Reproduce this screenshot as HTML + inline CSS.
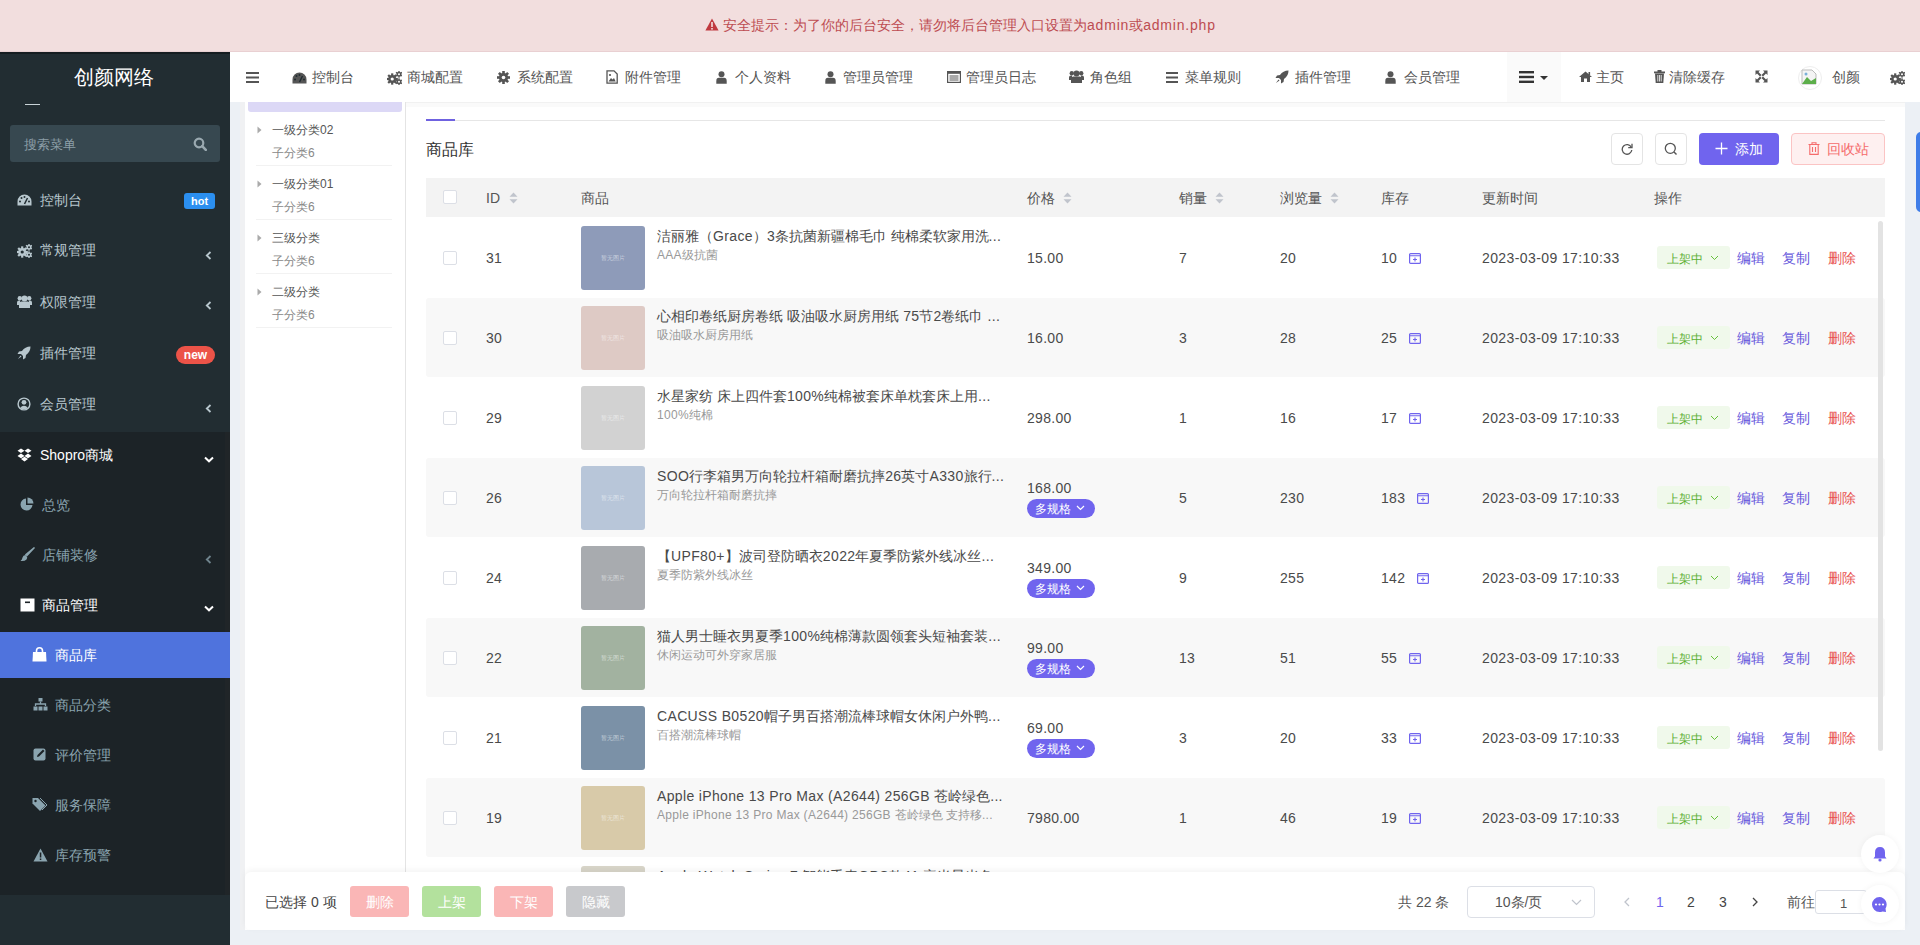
<!DOCTYPE html><html><head><meta charset="utf-8"><style>
*{box-sizing:border-box;margin:0;padding:0}
html,body{width:1920px;height:945px;overflow:hidden;font-family:"Liberation Sans",sans-serif;font-size:14px;color:#333;background:#ecf0f5;position:relative}
.a{position:absolute}
svg{display:block}
.t{position:absolute;white-space:nowrap;line-height:1}
</style></head><body>
<div class="a" style="left:0px;top:0px;width:1920px;height:52px;background:#f2dede;border-bottom:1px solid #e9d0d2"></div>
<svg class="a" style="left:705px;top:18px;" width="14" height="13" viewBox="0 0 14 13"><path d="M7 0.5 L13.6 12.5 H0.4 Z" fill="#c0393f"/><rect x="6.2" y="4" width="1.6" height="5" fill="#f2dede"/><rect x="6.2" y="10" width="1.6" height="1.6" fill="#f2dede"/></svg>
<div class="t" style="left:723px;top:18.0px;height:14px;line-height:14px;font-size:14px;color:#bd4c51;">安全提示：为了你的后台安全，请勿将后台管理入口设置为<span style="letter-spacing:.8px">admin</span>或<span style="letter-spacing:.8px">admin.php</span></div>
<div class="a" style="left:0px;top:52px;width:230px;height:893px;background:#222d32"></div>
<div class="a" style="left:0px;top:432px;width:230px;height:463px;background:#1c2327"></div>
<div class="a" style="left:0px;top:52px;width:230px;height:2px;background:#161d21"></div>
<div class="a" style="left:225px;top:432px;width:5px;height:463px;background:#202528"></div>
<div class="t" style="left:74px;top:67.0px;height:20px;line-height:20px;font-size:20px;color:#fff;">创颜网络</div>
<div class="a" style="left:25px;top:104px;width:15px;height:1px;background:#c9d3d7"></div>
<div class="a" style="left:10px;top:125px;width:210px;height:37px;background:#374850;border-radius:3px"></div>
<div class="t" style="left:24px;top:137.5px;height:13px;line-height:13px;font-size:13px;color:#8d9fa8;">搜索菜单</div>
<svg class="a" style="left:193px;top:137px;" width="14" height="14" viewBox="0 0 14 14"><circle cx="6" cy="6" r="4.3" stroke="#9aa9b0" stroke-width="2.2" fill="none"/><path d="M9.2 9.2 L12.8 12.8" stroke="#9aa9b0" stroke-width="2.6" stroke-linecap="round"/></svg>
<svg class="a" style="left:17px;top:194px;" width="15" height="12" viewBox="0 0 15 12"><path d="M7.5 0.5 A7 7 0 0 0 0.5 7.5 V11.5 H14.5 V7.5 A7 7 0 0 0 7.5 0.5 Z" fill="#b8c7ce"/><path d="M7.5 10 L10.5 4" stroke="#222d32" stroke-width="1.6"/><circle cx="3" cy="7.5" r="1" fill="#222d32"/><circle cx="4.5" cy="4" r="1" fill="#222d32"/><circle cx="7.5" cy="3" r="1" fill="#222d32"/><circle cx="12" cy="7.5" r="1" fill="#222d32"/></svg>
<div class="t" style="left:40px;top:193.0px;height:14px;line-height:14px;font-size:14px;color:#b8c7ce;">控制台</div>
<div class="a" style="left:184px;top:193px;width:31px;height:16px;background:#2b8ff0;border-radius:3px"></div>
<div class="t" style="left:184px;top:195.5px;height:11px;line-height:11px;font-size:11px;color:#fff;width:31px;text-align:center;font-weight:bold">hot</div>
<svg class="a" style="left:17px;top:244px;" width="15" height="14" viewBox="0 0 15 14"><g transform="translate(5.2 8)"><circle r="3.9" fill="#b8c7ce"/><rect x="-1.1" y="-5.66" width="2.2" height="2.64" fill="#b8c7ce" transform="rotate(0.0)"/><rect x="-1.1" y="-5.66" width="2.2" height="2.64" fill="#b8c7ce" transform="rotate(45.0)"/><rect x="-1.1" y="-5.66" width="2.2" height="2.64" fill="#b8c7ce" transform="rotate(90.0)"/><rect x="-1.1" y="-5.66" width="2.2" height="2.64" fill="#b8c7ce" transform="rotate(135.0)"/><rect x="-1.1" y="-5.66" width="2.2" height="2.64" fill="#b8c7ce" transform="rotate(180.0)"/><rect x="-1.1" y="-5.66" width="2.2" height="2.64" fill="#b8c7ce" transform="rotate(225.0)"/><rect x="-1.1" y="-5.66" width="2.2" height="2.64" fill="#b8c7ce" transform="rotate(270.0)"/><rect x="-1.1" y="-5.66" width="2.2" height="2.64" fill="#b8c7ce" transform="rotate(315.0)"/><circle r="1.6" fill="#222d32"/></g><g transform="translate(12 3.2)"><circle r="2.5" fill="#b8c7ce"/><rect x="-0.65" y="-3.54" width="1.3" height="1.56" fill="#b8c7ce" transform="rotate(0.0)"/><rect x="-0.65" y="-3.54" width="1.3" height="1.56" fill="#b8c7ce" transform="rotate(60.0)"/><rect x="-0.65" y="-3.54" width="1.3" height="1.56" fill="#b8c7ce" transform="rotate(120.0)"/><rect x="-0.65" y="-3.54" width="1.3" height="1.56" fill="#b8c7ce" transform="rotate(180.0)"/><rect x="-0.65" y="-3.54" width="1.3" height="1.56" fill="#b8c7ce" transform="rotate(240.0)"/><rect x="-0.65" y="-3.54" width="1.3" height="1.56" fill="#b8c7ce" transform="rotate(300.0)"/><circle r="1.0" fill="#222d32"/></g><g transform="translate(12 10.8)"><circle r="2.5" fill="#b8c7ce"/><rect x="-0.65" y="-3.54" width="1.3" height="1.56" fill="#b8c7ce" transform="rotate(0.0)"/><rect x="-0.65" y="-3.54" width="1.3" height="1.56" fill="#b8c7ce" transform="rotate(60.0)"/><rect x="-0.65" y="-3.54" width="1.3" height="1.56" fill="#b8c7ce" transform="rotate(120.0)"/><rect x="-0.65" y="-3.54" width="1.3" height="1.56" fill="#b8c7ce" transform="rotate(180.0)"/><rect x="-0.65" y="-3.54" width="1.3" height="1.56" fill="#b8c7ce" transform="rotate(240.0)"/><rect x="-0.65" y="-3.54" width="1.3" height="1.56" fill="#b8c7ce" transform="rotate(300.0)"/><circle r="1.0" fill="#222d32"/></g></svg>
<div class="t" style="left:40px;top:243.0px;height:14px;line-height:14px;font-size:14px;color:#b8c7ce;">常规管理</div>
<svg class="a" style="left:205px;top:251px;" width="7" height="9" viewBox="0 0 7 9"><path d="M5.5 1 L1.8 4.5 L5.5 8" stroke="#b8c7ce" stroke-width="1.8" fill="none"/></svg>
<svg class="a" style="left:17px;top:295px;" width="15" height="13" viewBox="0 0 15 13"><circle cx="7.5" cy="3.5" r="3" fill="#b8c7ce"/><circle cx="2.8" cy="3.2" r="2.2" fill="#b8c7ce"/><circle cx="12.2" cy="3.2" r="2.2" fill="#b8c7ce"/><path d="M2 13 V9 Q2 6.5 4.5 6.5 H10.5 Q13 6.5 13 9 V13 Z" fill="#b8c7ce"/><path d="M0 10 V7.5 Q0 5.5 2 5.5 H3 V10 Z M15 10 V7.5 Q15 5.5 13 5.5 H12 V10 Z" fill="#b8c7ce"/></svg>
<div class="t" style="left:40px;top:295.0px;height:14px;line-height:14px;font-size:14px;color:#b8c7ce;">权限管理</div>
<svg class="a" style="left:205px;top:301px;" width="7" height="9" viewBox="0 0 7 9"><path d="M5.5 1 L1.8 4.5 L5.5 8" stroke="#b8c7ce" stroke-width="1.8" fill="none"/></svg>
<svg class="a" style="left:17px;top:346px;" width="14" height="14" viewBox="0 0 14 14"><path d="M13.5 0.5 Q8 0.5 5 5 L2 5.5 L0.5 8 L4 8 L6 10 L6 13.5 L8.5 12 L9 9 Q13.5 6 13.5 0.5 Z" fill="#b8c7ce"/><path d="M3.5 9.5 L1 13 L4.5 10.5 Z" fill="#b8c7ce"/></svg>
<div class="t" style="left:40px;top:346.0px;height:14px;line-height:14px;font-size:14px;color:#b8c7ce;">插件管理</div>
<div class="a" style="left:176px;top:346px;width:39px;height:18px;background:#ec5348;border-radius:9px"></div>
<div class="t" style="left:176px;top:349.0px;height:12px;line-height:12px;font-size:12px;color:#fff;width:39px;text-align:center;font-weight:bold">new</div>
<svg class="a" style="left:17px;top:397px;" width="14" height="14" viewBox="0 0 14 14"><circle cx="7" cy="7" r="6.6" fill="#b8c7ce"/><circle cx="7" cy="7" r="5.2" fill="#222d32"/><circle cx="7" cy="5.3" r="2.4" fill="#b8c7ce"/><path d="M2.8 11.2 Q7 6.5 11.2 11.2 Q7 13.5 2.8 11.2Z" fill="#b8c7ce"/></svg>
<div class="t" style="left:40px;top:397.0px;height:14px;line-height:14px;font-size:14px;color:#b8c7ce;">会员管理</div>
<svg class="a" style="left:205px;top:404px;" width="7" height="9" viewBox="0 0 7 9"><path d="M5.5 1 L1.8 4.5 L5.5 8" stroke="#b8c7ce" stroke-width="1.8" fill="none"/></svg>
<svg class="a" style="left:17px;top:448px;" width="15" height="14" viewBox="0 0 15 14"><path d="M4 0.5 L7.5 2.8 L4 5.1 L0.5 2.8 Z M11 0.5 L14.5 2.8 L11 5.1 L7.5 2.8 Z M4 5.6 L7.5 7.9 L4 10.2 L0.5 7.9 Z M11 5.6 L14.5 7.9 L11 10.2 L7.5 7.9 Z M4 11 L7.5 8.8 L11 11 L7.5 13.5 Z" fill="#fff"/></svg>
<div class="t" style="left:40px;top:448.0px;height:14px;line-height:14px;font-size:14px;color:#fff;">Shopro商城</div>
<svg class="a" style="left:204px;top:456px;" width="10" height="7" viewBox="0 0 10 7"><path d="M1 1.5 L5 5.3 L9 1.5" stroke="#fff" stroke-width="2" fill="none"/></svg>
<svg class="a" style="left:20px;top:497px;" width="14" height="14" viewBox="0 0 14 14"><path d="M6 1.5 A6 6 0 1 0 12.5 8 H6 Z" fill="#8aa4af"/><path d="M7.5 0.5 A6 6 0 0 1 13.5 6.5 H7.5 Z" fill="#8aa4af"/></svg>
<div class="t" style="left:42px;top:498.0px;height:14px;line-height:14px;font-size:14px;color:#8aa4af;">总览</div>
<svg class="a" style="left:20px;top:547px;" width="15" height="15" viewBox="0 0 15 15"><path d="M14.5 0.5 L7 8.5 L6 7.5 Z" fill="#8aa4af" stroke="#8aa4af" stroke-width="1.5"/><path d="M5.5 8 Q3 8 2.5 10.5 Q2.2 12.5 0.5 14 Q4.5 14.5 6.5 12.5 Q8 10.5 6.5 9Z" fill="#8aa4af"/></svg>
<div class="t" style="left:42px;top:548.0px;height:14px;line-height:14px;font-size:14px;color:#8aa4af;">店铺装修</div>
<svg class="a" style="left:205px;top:555px;" width="7" height="9" viewBox="0 0 7 9"><path d="M5.5 1 L1.8 4.5 L5.5 8" stroke="#6f848d" stroke-width="1.8" fill="none"/></svg>
<svg class="a" style="left:20px;top:598px;" width="15" height="14" viewBox="0 0 15 14"><rect x="0.5" y="0.5" width="14" height="13" fill="#fff"/><rect x="5" y="3.5" width="5" height="1.6" fill="#1c2327"/></svg>
<div class="t" style="left:42px;top:598.0px;height:14px;line-height:14px;font-size:14px;color:#fff;">商品管理</div>
<svg class="a" style="left:204px;top:605px;" width="10" height="7" viewBox="0 0 10 7"><path d="M1 1.5 L5 5.3 L9 1.5" stroke="#fff" stroke-width="2" fill="none"/></svg>
<div class="a" style="left:0px;top:632px;width:230px;height:46px;background:#4f73dd"></div>
<svg class="a" style="left:32px;top:647px;" width="15" height="15" viewBox="0 0 15 15"><path d="M4.5 5 V3.8 A3 3 0 0 1 10.5 3.8 V5" stroke="#fff" stroke-width="1.6" fill="none"/><path d="M1 5 H14 L14.5 14.5 H0.5 Z" fill="#fff"/></svg>
<div class="t" style="left:55px;top:648.0px;height:14px;line-height:14px;font-size:14px;color:#fff;">商品库</div>
<svg class="a" style="left:33px;top:698px;" width="15" height="13" viewBox="0 0 15 13"><rect x="5.5" y="0" width="4" height="3.5" fill="#8aa4af"/><path d="M7.5 3.5 V6 M2.5 8 V6 H12.5 V8" stroke="#8aa4af" stroke-width="1.3" fill="none"/><rect x="0.5" y="8.5" width="4" height="4" fill="#8aa4af"/><rect x="5.5" y="8.5" width="4" height="4" fill="#8aa4af"/><rect x="10.5" y="8.5" width="4" height="4" fill="#8aa4af"/></svg>
<div class="t" style="left:55px;top:698.0px;height:14px;line-height:14px;font-size:14px;color:#8aa4af;">商品分类</div>
<svg class="a" style="left:33px;top:747px;" width="14" height="14" viewBox="0 0 14 14"><rect x="0.5" y="1.5" width="12" height="12" rx="2" fill="#8aa4af"/><path d="M4 10 L4.5 8 L10 2.5 L11.5 4 L6 9.5 Z" fill="#1c2327"/></svg>
<div class="t" style="left:55px;top:748.0px;height:14px;line-height:14px;font-size:14px;color:#8aa4af;">评价管理</div>
<svg class="a" style="left:32px;top:797px;" width="15" height="14" viewBox="0 0 15 14"><path d="M0.5 1 H6 L13.5 8.5 L8 14 L0.5 6.5 Z" fill="#8aa4af"/><circle cx="3.5" cy="4" r="1.2" fill="#1c2327"/><path d="M8 1 L15 8 L10 13" stroke="#8aa4af" stroke-width="1" fill="none"/></svg>
<div class="t" style="left:55px;top:798.0px;height:14px;line-height:14px;font-size:14px;color:#8aa4af;">服务保障</div>
<svg class="a" style="left:33px;top:848px;" width="15" height="14" viewBox="0 0 15 14"><path d="M7.5 0.5 L14.5 13.5 H0.5 Z" fill="#8aa4af"/><rect x="6.8" y="4.5" width="1.5" height="5" fill="#1c2327"/><rect x="6.8" y="10.5" width="1.5" height="1.5" fill="#1c2327"/></svg>
<div class="t" style="left:55px;top:848.0px;height:14px;line-height:14px;font-size:14px;color:#8aa4af;">库存预警</div>
<div class="a" style="left:230px;top:52px;width:1690px;height:50px;background:#fff"></div>
<svg class="a" style="left:246px;top:72px;" width="13" height="11" viewBox="0 0 13 11"><rect y="0" width="13" height="2" fill="#555"/><rect y="4.5" width="13" height="2" fill="#555"/><rect y="9" width="13" height="2" fill="#555"/></svg>
<svg class="a" style="left:292px;top:72px;" width="15" height="12" viewBox="0 0 15 12"><path d="M7.5 0.5 A7 7 0 0 0 0.5 7.5 V11.5 H14.5 V7.5 A7 7 0 0 0 7.5 0.5 Z" fill="#555"/><path d="M7.5 10 L10.5 4" stroke="#222d32" stroke-width="1.6"/><circle cx="3" cy="7.5" r="1" fill="#222d32"/><circle cx="4.5" cy="4" r="1" fill="#222d32"/><circle cx="7.5" cy="3" r="1" fill="#222d32"/><circle cx="12" cy="7.5" r="1" fill="#222d32"/></svg>
<div class="t" style="left:312px;top:70.0px;height:14px;line-height:14px;font-size:14px;color:#555;">控制台</div>
<svg class="a" style="left:387px;top:71px;" width="15" height="14" viewBox="0 0 15 14"><g transform="translate(5.2 8)"><circle r="3.9" fill="#555"/><rect x="-1.1" y="-5.66" width="2.2" height="2.64" fill="#555" transform="rotate(0.0)"/><rect x="-1.1" y="-5.66" width="2.2" height="2.64" fill="#555" transform="rotate(45.0)"/><rect x="-1.1" y="-5.66" width="2.2" height="2.64" fill="#555" transform="rotate(90.0)"/><rect x="-1.1" y="-5.66" width="2.2" height="2.64" fill="#555" transform="rotate(135.0)"/><rect x="-1.1" y="-5.66" width="2.2" height="2.64" fill="#555" transform="rotate(180.0)"/><rect x="-1.1" y="-5.66" width="2.2" height="2.64" fill="#555" transform="rotate(225.0)"/><rect x="-1.1" y="-5.66" width="2.2" height="2.64" fill="#555" transform="rotate(270.0)"/><rect x="-1.1" y="-5.66" width="2.2" height="2.64" fill="#555" transform="rotate(315.0)"/><circle r="1.6" fill="#fff"/></g><g transform="translate(12 3.2)"><circle r="2.5" fill="#555"/><rect x="-0.65" y="-3.54" width="1.3" height="1.56" fill="#555" transform="rotate(0.0)"/><rect x="-0.65" y="-3.54" width="1.3" height="1.56" fill="#555" transform="rotate(60.0)"/><rect x="-0.65" y="-3.54" width="1.3" height="1.56" fill="#555" transform="rotate(120.0)"/><rect x="-0.65" y="-3.54" width="1.3" height="1.56" fill="#555" transform="rotate(180.0)"/><rect x="-0.65" y="-3.54" width="1.3" height="1.56" fill="#555" transform="rotate(240.0)"/><rect x="-0.65" y="-3.54" width="1.3" height="1.56" fill="#555" transform="rotate(300.0)"/><circle r="1.0" fill="#fff"/></g><g transform="translate(12 10.8)"><circle r="2.5" fill="#555"/><rect x="-0.65" y="-3.54" width="1.3" height="1.56" fill="#555" transform="rotate(0.0)"/><rect x="-0.65" y="-3.54" width="1.3" height="1.56" fill="#555" transform="rotate(60.0)"/><rect x="-0.65" y="-3.54" width="1.3" height="1.56" fill="#555" transform="rotate(120.0)"/><rect x="-0.65" y="-3.54" width="1.3" height="1.56" fill="#555" transform="rotate(180.0)"/><rect x="-0.65" y="-3.54" width="1.3" height="1.56" fill="#555" transform="rotate(240.0)"/><rect x="-0.65" y="-3.54" width="1.3" height="1.56" fill="#555" transform="rotate(300.0)"/><circle r="1.0" fill="#fff"/></g></svg>
<div class="t" style="left:407px;top:70.0px;height:14px;line-height:14px;font-size:14px;color:#555;">商城配置</div>
<svg class="a" style="left:497px;top:71px;" width="13" height="13" viewBox="0 0 13 13"><g transform="translate(6.5 6.5)"><circle r="4.6" fill="#555"/><rect x="-1.3" y="-6.5" width="2.6" height="3" fill="#555" transform="rotate(0)"/><rect x="-1.3" y="-6.5" width="2.6" height="3" fill="#555" transform="rotate(45)"/><rect x="-1.3" y="-6.5" width="2.6" height="3" fill="#555" transform="rotate(90)"/><rect x="-1.3" y="-6.5" width="2.6" height="3" fill="#555" transform="rotate(135)"/><rect x="-1.3" y="-6.5" width="2.6" height="3" fill="#555" transform="rotate(180)"/><rect x="-1.3" y="-6.5" width="2.6" height="3" fill="#555" transform="rotate(225)"/><rect x="-1.3" y="-6.5" width="2.6" height="3" fill="#555" transform="rotate(270)"/><rect x="-1.3" y="-6.5" width="2.6" height="3" fill="#555" transform="rotate(315)"/><circle r="1.8" fill="#fff"/></g></svg>
<div class="t" style="left:517px;top:70.0px;height:14px;line-height:14px;font-size:14px;color:#555;">系统配置</div>
<svg class="a" style="left:606px;top:70px;" width="12" height="14" viewBox="0 0 12 14"><path d="M1 0.8 H8 L11.2 4 V13.2 H1 Z" stroke="#555" stroke-width="1.3" fill="none"/><path d="M2.5 11.5 L5 8 L6.5 9.5 L8 8 L9.7 11.5Z" fill="#555"/><circle cx="4" cy="5" r="1.1" fill="#555"/></svg>
<div class="t" style="left:625px;top:70.0px;height:14px;line-height:14px;font-size:14px;color:#555;">附件管理</div>
<svg class="a" style="left:716px;top:71px;" width="11" height="13" viewBox="0 0 11 13"><circle cx="5.5" cy="3.2" r="3" fill="#555"/><path d="M0.3 12.8 V10 Q0.3 6.8 3 6.8 H8 Q10.7 6.8 10.7 10 V12.8Z" fill="#555"/></svg>
<div class="t" style="left:735px;top:70.0px;height:14px;line-height:14px;font-size:14px;color:#555;">个人资料</div>
<svg class="a" style="left:825px;top:71px;" width="11" height="13" viewBox="0 0 11 13"><circle cx="5.5" cy="3.2" r="3" fill="#555"/><path d="M0.3 12.8 V10 Q0.3 6.8 3 6.8 H8 Q10.7 6.8 10.7 10 V12.8Z" fill="#555"/></svg>
<div class="t" style="left:843px;top:70.0px;height:14px;line-height:14px;font-size:14px;color:#555;">管理员管理</div>
<svg class="a" style="left:947px;top:71px;" width="14" height="12" viewBox="0 0 14 12"><rect x="0.6" y="0.6" width="12.8" height="10.8" stroke="#555" stroke-width="1.2" fill="none"/><rect x="0.6" y="0.6" width="12.8" height="2.2" fill="#555"/><path d="M2.5 5 H11.5 M2.5 7 H11.5 M2.5 9 H11.5" stroke="#555" stroke-width="1"/></svg>
<div class="t" style="left:966px;top:70.0px;height:14px;line-height:14px;font-size:14px;color:#555;">管理员日志</div>
<svg class="a" style="left:1069px;top:70px;" width="15" height="13" viewBox="0 0 15 13"><circle cx="7.5" cy="3.5" r="3" fill="#555"/><circle cx="2.8" cy="3.2" r="2.2" fill="#555"/><circle cx="12.2" cy="3.2" r="2.2" fill="#555"/><path d="M2 13 V9 Q2 6.5 4.5 6.5 H10.5 Q13 6.5 13 9 V13 Z" fill="#555"/><path d="M0 10 V7.5 Q0 5.5 2 5.5 H3 V10 Z M15 10 V7.5 Q15 5.5 13 5.5 H12 V10 Z" fill="#555"/></svg>
<div class="t" style="left:1090px;top:70.0px;height:14px;line-height:14px;font-size:14px;color:#555;">角色组</div>
<svg class="a" style="left:1166px;top:72px;" width="12" height="11" viewBox="0 0 12 11"><rect y="0" width="12" height="2" fill="#555"/><rect y="4.5" width="12" height="2" fill="#555"/><rect y="9" width="12" height="2" fill="#555"/></svg>
<div class="t" style="left:1185px;top:70.0px;height:14px;line-height:14px;font-size:14px;color:#555;">菜单规则</div>
<svg class="a" style="left:1275px;top:70px;" width="14" height="14" viewBox="0 0 14 14"><path d="M13.5 0.5 Q8 0.5 5 5 L2 5.5 L0.5 8 L4 8 L6 10 L6 13.5 L8.5 12 L9 9 Q13.5 6 13.5 0.5 Z" fill="#555"/><path d="M3.5 9.5 L1 13 L4.5 10.5 Z" fill="#555"/></svg>
<div class="t" style="left:1295px;top:70.0px;height:14px;line-height:14px;font-size:14px;color:#555;">插件管理</div>
<svg class="a" style="left:1385px;top:71px;" width="11" height="13" viewBox="0 0 11 13"><circle cx="5.5" cy="3.2" r="3" fill="#555"/><path d="M0.3 12.8 V10 Q0.3 6.8 3 6.8 H8 Q10.7 6.8 10.7 10 V12.8Z" fill="#555"/></svg>
<div class="t" style="left:1404px;top:70.0px;height:14px;line-height:14px;font-size:14px;color:#555;">会员管理</div>
<div class="a" style="left:1507px;top:52px;width:54px;height:50px;background:#fafafa"></div>
<svg class="a" style="left:1519px;top:71px;" width="15" height="12" viewBox="0 0 15 12"><rect y="0" width="15" height="2.4" fill="#333"/><rect y="4.8" width="15" height="2.4" fill="#333"/><rect y="9.6" width="15" height="2.4" fill="#333"/></svg>
<svg class="a" style="left:1540px;top:76px;" width="8" height="4" viewBox="0 0 8 4"><path d="M0 0 H8 L4 4Z" fill="#333"/></svg>
<svg class="a" style="left:1579px;top:71px;" width="13" height="11" viewBox="0 0 13 11"><path d="M6.5 0.5 L13 6 H11 V11 H8 V7.5 H5 V11 H2 V6 H0 Z" fill="#555"/><rect x="9.5" y="1" width="1.6" height="3" fill="#555"/></svg>
<div class="t" style="left:1596px;top:70.0px;height:14px;line-height:14px;font-size:14px;color:#555;">主页</div>
<svg class="a" style="left:1654px;top:70px;" width="11" height="13" viewBox="0 0 11 13"><rect x="0" y="1.5" width="11" height="1.8" fill="#555"/><rect x="3.5" y="0" width="4" height="2" fill="#555"/><path d="M1 3.5 H10 L9.3 13 H1.7 Z" fill="#555"/><path d="M3.8 5 V11.5 M5.5 5 V11.5 M7.2 5 V11.5" stroke="#fff" stroke-width=".8"/></svg>
<div class="t" style="left:1669px;top:70.0px;height:14px;line-height:14px;font-size:14px;color:#555;">清除缓存</div>
<svg class="a" style="left:1755px;top:70px;" width="13" height="13" viewBox="0 0 13 13"><path d="M0.5 0.5 H5 L3.5 2 L6.5 5 L5 6.5 L2 3.5 L0.5 5Z M12.5 0.5 V5 L11 3.5 L8 6.5 L6.5 5 L9.5 2 L8 0.5Z M0.5 12.5 V8 L2 9.5 L5 6.5 L6.5 8 L3.5 11 L5 12.5Z M12.5 12.5 H8 L9.5 11 L6.5 8 L8 6.5 L11 9.5 L12.5 8Z" fill="#555"/></svg>
<div class="a" style="left:1798px;top:66px;width:24px;height:24px;border-radius:50%;background:#fff;border:1px solid #eee"></div>
<svg class="a" style="left:1801px;top:69px;" width="16" height="16" viewBox="0 0 16 16"><path d="M1 1 H11 L15 5 V15 H1Z" fill="#f4f4f4" stroke="#bbb" stroke-width="1"/><path d="M1 15 L6 8 L10 12 L15 9 V15Z" fill="#5cae4a"/><circle cx="5" cy="5" r="1.5" fill="#7ab0d8"/></svg>
<div class="t" style="left:1832px;top:70.0px;height:14px;line-height:14px;font-size:14px;color:#555;">创颜</div>
<svg class="a" style="left:1890px;top:71px;" width="15" height="14" viewBox="0 0 15 14"><g transform="translate(5.2 8)"><circle r="3.9" fill="#555"/><rect x="-1.1" y="-5.66" width="2.2" height="2.64" fill="#555" transform="rotate(0.0)"/><rect x="-1.1" y="-5.66" width="2.2" height="2.64" fill="#555" transform="rotate(45.0)"/><rect x="-1.1" y="-5.66" width="2.2" height="2.64" fill="#555" transform="rotate(90.0)"/><rect x="-1.1" y="-5.66" width="2.2" height="2.64" fill="#555" transform="rotate(135.0)"/><rect x="-1.1" y="-5.66" width="2.2" height="2.64" fill="#555" transform="rotate(180.0)"/><rect x="-1.1" y="-5.66" width="2.2" height="2.64" fill="#555" transform="rotate(225.0)"/><rect x="-1.1" y="-5.66" width="2.2" height="2.64" fill="#555" transform="rotate(270.0)"/><rect x="-1.1" y="-5.66" width="2.2" height="2.64" fill="#555" transform="rotate(315.0)"/><circle r="1.6" fill="#fff"/></g><g transform="translate(12 3.2)"><circle r="2.5" fill="#555"/><rect x="-0.65" y="-3.54" width="1.3" height="1.56" fill="#555" transform="rotate(0.0)"/><rect x="-0.65" y="-3.54" width="1.3" height="1.56" fill="#555" transform="rotate(60.0)"/><rect x="-0.65" y="-3.54" width="1.3" height="1.56" fill="#555" transform="rotate(120.0)"/><rect x="-0.65" y="-3.54" width="1.3" height="1.56" fill="#555" transform="rotate(180.0)"/><rect x="-0.65" y="-3.54" width="1.3" height="1.56" fill="#555" transform="rotate(240.0)"/><rect x="-0.65" y="-3.54" width="1.3" height="1.56" fill="#555" transform="rotate(300.0)"/><circle r="1.0" fill="#fff"/></g><g transform="translate(12 10.8)"><circle r="2.5" fill="#555"/><rect x="-0.65" y="-3.54" width="1.3" height="1.56" fill="#555" transform="rotate(0.0)"/><rect x="-0.65" y="-3.54" width="1.3" height="1.56" fill="#555" transform="rotate(60.0)"/><rect x="-0.65" y="-3.54" width="1.3" height="1.56" fill="#555" transform="rotate(120.0)"/><rect x="-0.65" y="-3.54" width="1.3" height="1.56" fill="#555" transform="rotate(180.0)"/><rect x="-0.65" y="-3.54" width="1.3" height="1.56" fill="#555" transform="rotate(240.0)"/><rect x="-0.65" y="-3.54" width="1.3" height="1.56" fill="#555" transform="rotate(300.0)"/><circle r="1.0" fill="#fff"/></g></svg>
<div class="a" style="left:240px;top:102px;width:5px;height:828px;background:#f0f1f3"></div>
<div class="a" style="left:245px;top:102px;width:1660px;height:828px;background:#fff"></div>
<div class="a" style="left:405px;top:102px;width:1px;height:770px;background:#e4e4e4"></div>
<div class="a" style="left:406px;top:102px;width:1499px;height:1px;background:#f1f1f1"></div>
<div class="a" style="left:406px;top:103px;width:1499px;height:4px;background:#fafafa"></div>
<div class="a" style="left:248px;top:102px;width:154px;height:10px;background:#dcd8f6;border-radius:0 0 3px 3px"></div>
<svg class="a" style="left:257px;top:126px;" width="5" height="8" viewBox="0 0 5 8"><path d="M0.5 0.5 L4.5 4 L0.5 7.5Z" fill="#aaa"/></svg>
<div class="t" style="left:272px;top:124.0px;height:12px;line-height:12px;font-size:12px;color:#555;">一级分类02</div>
<div class="t" style="left:272px;top:147.0px;height:12px;line-height:12px;font-size:12px;color:#888;">子分类6</div>
<div class="a" style="left:256px;top:165px;width:136px;height:1px;background:#f2f2f2"></div>
<svg class="a" style="left:257px;top:180px;" width="5" height="8" viewBox="0 0 5 8"><path d="M0.5 0.5 L4.5 4 L0.5 7.5Z" fill="#aaa"/></svg>
<div class="t" style="left:272px;top:178.0px;height:12px;line-height:12px;font-size:12px;color:#555;">一级分类01</div>
<div class="t" style="left:272px;top:201.0px;height:12px;line-height:12px;font-size:12px;color:#888;">子分类6</div>
<div class="a" style="left:256px;top:219px;width:136px;height:1px;background:#f2f2f2"></div>
<svg class="a" style="left:257px;top:234px;" width="5" height="8" viewBox="0 0 5 8"><path d="M0.5 0.5 L4.5 4 L0.5 7.5Z" fill="#aaa"/></svg>
<div class="t" style="left:272px;top:232.0px;height:12px;line-height:12px;font-size:12px;color:#555;">三级分类</div>
<div class="t" style="left:272px;top:255.0px;height:12px;line-height:12px;font-size:12px;color:#888;">子分类6</div>
<div class="a" style="left:256px;top:273px;width:136px;height:1px;background:#f2f2f2"></div>
<svg class="a" style="left:257px;top:288px;" width="5" height="8" viewBox="0 0 5 8"><path d="M0.5 0.5 L4.5 4 L0.5 7.5Z" fill="#aaa"/></svg>
<div class="t" style="left:272px;top:286.0px;height:12px;line-height:12px;font-size:12px;color:#555;">二级分类</div>
<div class="t" style="left:272px;top:309.0px;height:12px;line-height:12px;font-size:12px;color:#888;">子分类6</div>
<div class="a" style="left:256px;top:327px;width:136px;height:1px;background:#f2f2f2"></div>
<div class="a" style="left:426px;top:119px;width:29px;height:2px;background:#6f62e0"></div>
<div class="a" style="left:455px;top:120px;width:1430px;height:1px;background:#e6e6e6"></div>
<div class="t" style="left:426px;top:142.0px;height:16px;line-height:16px;font-size:16px;color:#333;">商品库</div>
<div class="a" style="left:1611px;top:133px;width:32px;height:32px;background:#fff;border:1px solid #e4e4e4;border-radius:4px"></div>
<svg class="a" style="left:1621px;top:143px;" width="12" height="12" viewBox="0 0 12 12"><path d="M10.3 4.2 A4.8 4.8 0 1 0 10.8 7" stroke="#555" stroke-width="1.3" fill="none"/><path d="M11 0.8 V4.6 H7.2" stroke="#555" stroke-width="1.3" fill="none"/></svg>
<div class="a" style="left:1655px;top:133px;width:32px;height:32px;background:#fff;border:1px solid #e4e4e4;border-radius:4px"></div>
<svg class="a" style="left:1664px;top:142px;" width="14" height="14" viewBox="0 0 14 14"><circle cx="6.3" cy="6.3" r="5" stroke="#555" stroke-width="1.3" fill="none"/><path d="M10 10 L12.5 12.5" stroke="#555" stroke-width="1.4"/></svg>
<div class="a" style="left:1699px;top:133px;width:80px;height:32px;background:#7064ee;border-radius:4px"></div>
<svg class="a" style="left:1715px;top:142px;" width="13" height="13" viewBox="0 0 13 13"><path d="M6.5 0.5 V12.5 M0.5 6.5 H12.5" stroke="#fff" stroke-width="1.3"/></svg>
<div class="t" style="left:1735px;top:142.0px;height:14px;line-height:14px;font-size:14px;color:#fff;">添加</div>
<div class="a" style="left:1791px;top:133px;width:94px;height:32px;background:#fef0f0;border:1px solid #fbc4c4;border-radius:4px"></div>
<svg class="a" style="left:1808px;top:142px;" width="12" height="13" viewBox="0 0 12 13"><path d="M0.5 2.5 H11.5 M4 2.5 V0.7 H8 V2.5 M1.8 2.5 V12.4 H10.2 V2.5 M4.5 5 V10 M7.5 5 V10" stroke="#f56c6c" stroke-width="1.1" fill="none"/></svg>
<div class="t" style="left:1827px;top:142.0px;height:14px;line-height:14px;font-size:14px;color:#f56c6c;">回收站</div>
<div class="a" style="left:426px;top:178px;width:1459px;height:39px;background:#f3f3f3"></div>
<div class="a" style="left:443px;top:190px;width:14px;height:14px;background:#fff;border:1px solid #dcdfe6;border-radius:2px"></div>
<div class="t" style="left:486px;top:191.0px;height:14px;line-height:14px;font-size:14px;color:#555;">ID</div>
<svg class="a" style="left:509px;top:192px;" width="9" height="12" viewBox="0 0 9 12"><path d="M4.5 0.5 L8.5 4.8 H0.5Z M4.5 11.5 L8.5 7.2 H0.5Z" fill="#c0c4cc"/></svg>
<div class="t" style="left:581px;top:191.0px;height:14px;line-height:14px;font-size:14px;color:#555;">商品</div>
<div class="t" style="left:1027px;top:191.0px;height:14px;line-height:14px;font-size:14px;color:#555;">价格</div>
<svg class="a" style="left:1063px;top:192px;" width="9" height="12" viewBox="0 0 9 12"><path d="M4.5 0.5 L8.5 4.8 H0.5Z M4.5 11.5 L8.5 7.2 H0.5Z" fill="#c0c4cc"/></svg>
<div class="t" style="left:1179px;top:191.0px;height:14px;line-height:14px;font-size:14px;color:#555;">销量</div>
<svg class="a" style="left:1215px;top:192px;" width="9" height="12" viewBox="0 0 9 12"><path d="M4.5 0.5 L8.5 4.8 H0.5Z M4.5 11.5 L8.5 7.2 H0.5Z" fill="#c0c4cc"/></svg>
<div class="t" style="left:1280px;top:191.0px;height:14px;line-height:14px;font-size:14px;color:#555;">浏览量</div>
<svg class="a" style="left:1330px;top:192px;" width="9" height="12" viewBox="0 0 9 12"><path d="M4.5 0.5 L8.5 4.8 H0.5Z M4.5 11.5 L8.5 7.2 H0.5Z" fill="#c0c4cc"/></svg>
<div class="t" style="left:1381px;top:191.0px;height:14px;line-height:14px;font-size:14px;color:#555;">库存</div>
<div class="t" style="left:1482px;top:191.0px;height:14px;line-height:14px;font-size:14px;color:#555;">更新时间</div>
<div class="t" style="left:1654px;top:191.0px;height:14px;line-height:14px;font-size:14px;color:#555;">操作</div>
<div class="a" style="left:443px;top:251px;width:14px;height:14px;background:#fff;border:1px solid #dcdfe6;border-radius:2px"></div>
<div class="t" style="left:486px;top:251.0px;height:14px;line-height:14px;font-size:14px;color:#4a4a4a;letter-spacing:.3px">31</div>
<div class="a" style="left:581px;top:226px;width:64px;height:64px;background:#8e9bb9;border-radius:3px"></div>
<div class="t" style="left:601px;top:255.0px;height:6px;line-height:6px;font-size:6px;color:rgba(255,255,255,.55);">暂无图片</div>
<div class="t" style="left:657px;top:229.0px;height:14px;line-height:14px;font-size:14px;color:#4a4a4a;">洁丽雅（<span style="letter-spacing:0.35px">Grace</span>）3条抗菌新疆棉毛巾 纯棉柔软家用洗<span style="letter-spacing:0.35px">...</span></div>
<div class="t" style="left:657px;top:248.5px;height:12px;line-height:12px;font-size:12px;color:#999;"><span style="letter-spacing:0.3px">AAA</span>级抗菌</div>
<div class="t" style="left:1027px;top:251.0px;height:14px;line-height:14px;font-size:14px;color:#4a4a4a;letter-spacing:.3px">15.00</div>
<div class="t" style="left:1179px;top:251.0px;height:14px;line-height:14px;font-size:14px;color:#4a4a4a;letter-spacing:.3px">7</div>
<div class="t" style="left:1280px;top:251.0px;height:14px;line-height:14px;font-size:14px;color:#4a4a4a;letter-spacing:.3px">20</div>
<div class="t" style="left:1381px;top:251.0px;height:14px;line-height:14px;font-size:14px;color:#4a4a4a;letter-spacing:.3px">10</div>
<svg class="a" style="left:1409px;top:252px;" width="12" height="12" viewBox="0 0 12 12"><rect x="0.6" y="1.6" width="10.8" height="9.8" rx="1" stroke="#7064ee" stroke-width="1.2" fill="none"/><path d="M0.6 3.8 H11.4 M6 5.5 V9.5 M4 7.5 H8" stroke="#7064ee" stroke-width="1.1"/></svg>
<div class="t" style="left:1482px;top:251.0px;height:14px;line-height:14px;font-size:14px;color:#4a4a4a;letter-spacing:.4px">2023-03-09 17:10:33</div>
<div class="a" style="left:1657px;top:246px;width:73px;height:23px;background:#f0f9eb;border-radius:3px"></div>
<div class="t" style="left:1667px;top:253.0px;height:12px;line-height:12px;font-size:12px;color:#5cb034;">上架中</div>
<svg class="a" style="left:1710px;top:255px;" width="9" height="6" viewBox="0 0 9 6"><path d="M1 1 L4.5 4.5 L8 1" stroke="#67c23a" stroke-width="1" fill="none"/></svg>
<div class="t" style="left:1737px;top:251.0px;height:14px;line-height:14px;font-size:14px;color:#6657dc;">编辑</div>
<div class="t" style="left:1782px;top:251.0px;height:14px;line-height:14px;font-size:14px;color:#6657dc;">复制</div>
<div class="t" style="left:1828px;top:251.0px;height:14px;line-height:14px;font-size:14px;color:#e85250;">删除</div>
<div class="a" style="left:426px;top:298px;width:1459px;height:79px;background:#f8f8f8;border-radius:3px"></div>
<div class="a" style="left:443px;top:331px;width:14px;height:14px;background:#fff;border:1px solid #dcdfe6;border-radius:2px"></div>
<div class="t" style="left:486px;top:331.0px;height:14px;line-height:14px;font-size:14px;color:#4a4a4a;letter-spacing:.3px">30</div>
<div class="a" style="left:581px;top:306px;width:64px;height:64px;background:#decac5;border-radius:3px"></div>
<div class="t" style="left:601px;top:335.0px;height:6px;line-height:6px;font-size:6px;color:rgba(255,255,255,.55);">暂无图片</div>
<div class="t" style="left:657px;top:309.0px;height:14px;line-height:14px;font-size:14px;color:#4a4a4a;">心相印卷纸厨房卷纸 吸油吸水厨房用纸<span style="letter-spacing:0.35px"> 75</span>节2卷纸巾<span style="letter-spacing:0.35px"> ...</span></div>
<div class="t" style="left:657px;top:328.5px;height:12px;line-height:12px;font-size:12px;color:#999;">吸油吸水厨房用纸</div>
<div class="t" style="left:1027px;top:331.0px;height:14px;line-height:14px;font-size:14px;color:#4a4a4a;letter-spacing:.3px">16.00</div>
<div class="t" style="left:1179px;top:331.0px;height:14px;line-height:14px;font-size:14px;color:#4a4a4a;letter-spacing:.3px">3</div>
<div class="t" style="left:1280px;top:331.0px;height:14px;line-height:14px;font-size:14px;color:#4a4a4a;letter-spacing:.3px">28</div>
<div class="t" style="left:1381px;top:331.0px;height:14px;line-height:14px;font-size:14px;color:#4a4a4a;letter-spacing:.3px">25</div>
<svg class="a" style="left:1409px;top:332px;" width="12" height="12" viewBox="0 0 12 12"><rect x="0.6" y="1.6" width="10.8" height="9.8" rx="1" stroke="#7064ee" stroke-width="1.2" fill="none"/><path d="M0.6 3.8 H11.4 M6 5.5 V9.5 M4 7.5 H8" stroke="#7064ee" stroke-width="1.1"/></svg>
<div class="t" style="left:1482px;top:331.0px;height:14px;line-height:14px;font-size:14px;color:#4a4a4a;letter-spacing:.4px">2023-03-09 17:10:33</div>
<div class="a" style="left:1657px;top:326px;width:73px;height:23px;background:#f0f9eb;border-radius:3px"></div>
<div class="t" style="left:1667px;top:333.0px;height:12px;line-height:12px;font-size:12px;color:#5cb034;">上架中</div>
<svg class="a" style="left:1710px;top:335px;" width="9" height="6" viewBox="0 0 9 6"><path d="M1 1 L4.5 4.5 L8 1" stroke="#67c23a" stroke-width="1" fill="none"/></svg>
<div class="t" style="left:1737px;top:331.0px;height:14px;line-height:14px;font-size:14px;color:#6657dc;">编辑</div>
<div class="t" style="left:1782px;top:331.0px;height:14px;line-height:14px;font-size:14px;color:#6657dc;">复制</div>
<div class="t" style="left:1828px;top:331.0px;height:14px;line-height:14px;font-size:14px;color:#e85250;">删除</div>
<div class="a" style="left:443px;top:411px;width:14px;height:14px;background:#fff;border:1px solid #dcdfe6;border-radius:2px"></div>
<div class="t" style="left:486px;top:411.0px;height:14px;line-height:14px;font-size:14px;color:#4a4a4a;letter-spacing:.3px">29</div>
<div class="a" style="left:581px;top:386px;width:64px;height:64px;background:#d2d2d2;border-radius:3px"></div>
<div class="t" style="left:601px;top:415.0px;height:6px;line-height:6px;font-size:6px;color:rgba(255,255,255,.55);">暂无图片</div>
<div class="t" style="left:657px;top:389.0px;height:14px;line-height:14px;font-size:14px;color:#4a4a4a;">水星家纺 床上四件套<span style="letter-spacing:0.35px">100%</span>纯棉被套床单枕套床上用<span style="letter-spacing:0.35px">...</span></div>
<div class="t" style="left:657px;top:408.5px;height:12px;line-height:12px;font-size:12px;color:#999;"><span style="letter-spacing:0.3px">100%</span>纯棉</div>
<div class="t" style="left:1027px;top:411.0px;height:14px;line-height:14px;font-size:14px;color:#4a4a4a;letter-spacing:.3px">298.00</div>
<div class="t" style="left:1179px;top:411.0px;height:14px;line-height:14px;font-size:14px;color:#4a4a4a;letter-spacing:.3px">1</div>
<div class="t" style="left:1280px;top:411.0px;height:14px;line-height:14px;font-size:14px;color:#4a4a4a;letter-spacing:.3px">16</div>
<div class="t" style="left:1381px;top:411.0px;height:14px;line-height:14px;font-size:14px;color:#4a4a4a;letter-spacing:.3px">17</div>
<svg class="a" style="left:1409px;top:412px;" width="12" height="12" viewBox="0 0 12 12"><rect x="0.6" y="1.6" width="10.8" height="9.8" rx="1" stroke="#7064ee" stroke-width="1.2" fill="none"/><path d="M0.6 3.8 H11.4 M6 5.5 V9.5 M4 7.5 H8" stroke="#7064ee" stroke-width="1.1"/></svg>
<div class="t" style="left:1482px;top:411.0px;height:14px;line-height:14px;font-size:14px;color:#4a4a4a;letter-spacing:.4px">2023-03-09 17:10:33</div>
<div class="a" style="left:1657px;top:406px;width:73px;height:23px;background:#f0f9eb;border-radius:3px"></div>
<div class="t" style="left:1667px;top:413.0px;height:12px;line-height:12px;font-size:12px;color:#5cb034;">上架中</div>
<svg class="a" style="left:1710px;top:415px;" width="9" height="6" viewBox="0 0 9 6"><path d="M1 1 L4.5 4.5 L8 1" stroke="#67c23a" stroke-width="1" fill="none"/></svg>
<div class="t" style="left:1737px;top:411.0px;height:14px;line-height:14px;font-size:14px;color:#6657dc;">编辑</div>
<div class="t" style="left:1782px;top:411.0px;height:14px;line-height:14px;font-size:14px;color:#6657dc;">复制</div>
<div class="t" style="left:1828px;top:411.0px;height:14px;line-height:14px;font-size:14px;color:#e85250;">删除</div>
<div class="a" style="left:426px;top:458px;width:1459px;height:79px;background:#f8f8f8;border-radius:3px"></div>
<div class="a" style="left:443px;top:491px;width:14px;height:14px;background:#fff;border:1px solid #dcdfe6;border-radius:2px"></div>
<div class="t" style="left:486px;top:491.0px;height:14px;line-height:14px;font-size:14px;color:#4a4a4a;letter-spacing:.3px">26</div>
<div class="a" style="left:581px;top:466px;width:64px;height:64px;background:#b8c6d9;border-radius:3px"></div>
<div class="t" style="left:601px;top:495.0px;height:6px;line-height:6px;font-size:6px;color:rgba(255,255,255,.55);">暂无图片</div>
<div class="t" style="left:657px;top:469.0px;height:14px;line-height:14px;font-size:14px;color:#4a4a4a;"><span style="letter-spacing:0.35px">SOO</span>行李箱男万向轮拉杆箱耐磨抗摔<span style="letter-spacing:0.35px">26</span>英寸<span style="letter-spacing:0.35px">A330</span>旅行<span style="letter-spacing:0.35px">...</span></div>
<div class="t" style="left:657px;top:488.5px;height:12px;line-height:12px;font-size:12px;color:#999;">万向轮拉杆箱耐磨抗摔</div>
<div class="t" style="left:1027px;top:481.0px;height:14px;line-height:14px;font-size:14px;color:#4a4a4a;letter-spacing:.3px">168.00</div>
<div class="a" style="left:1027px;top:499px;width:68px;height:19px;background:#7064ee;border-radius:10px"></div>
<div class="t" style="left:1035px;top:502.5px;height:12px;line-height:12px;font-size:12px;color:#fff;">多规格</div>
<svg class="a" style="left:1076px;top:505px;" width="9" height="6" viewBox="0 0 9 6"><path d="M1 1 L4.5 4.5 L8 1" stroke="#fff" stroke-width="1.2" fill="none"/></svg>
<div class="t" style="left:1179px;top:491.0px;height:14px;line-height:14px;font-size:14px;color:#4a4a4a;letter-spacing:.3px">5</div>
<div class="t" style="left:1280px;top:491.0px;height:14px;line-height:14px;font-size:14px;color:#4a4a4a;letter-spacing:.3px">230</div>
<div class="t" style="left:1381px;top:491.0px;height:14px;line-height:14px;font-size:14px;color:#4a4a4a;letter-spacing:.3px">183</div>
<svg class="a" style="left:1417px;top:492px;" width="12" height="12" viewBox="0 0 12 12"><rect x="0.6" y="1.6" width="10.8" height="9.8" rx="1" stroke="#7064ee" stroke-width="1.2" fill="none"/><path d="M0.6 3.8 H11.4 M6 5.5 V9.5 M4 7.5 H8" stroke="#7064ee" stroke-width="1.1"/></svg>
<div class="t" style="left:1482px;top:491.0px;height:14px;line-height:14px;font-size:14px;color:#4a4a4a;letter-spacing:.4px">2023-03-09 17:10:33</div>
<div class="a" style="left:1657px;top:486px;width:73px;height:23px;background:#f0f9eb;border-radius:3px"></div>
<div class="t" style="left:1667px;top:493.0px;height:12px;line-height:12px;font-size:12px;color:#5cb034;">上架中</div>
<svg class="a" style="left:1710px;top:495px;" width="9" height="6" viewBox="0 0 9 6"><path d="M1 1 L4.5 4.5 L8 1" stroke="#67c23a" stroke-width="1" fill="none"/></svg>
<div class="t" style="left:1737px;top:491.0px;height:14px;line-height:14px;font-size:14px;color:#6657dc;">编辑</div>
<div class="t" style="left:1782px;top:491.0px;height:14px;line-height:14px;font-size:14px;color:#6657dc;">复制</div>
<div class="t" style="left:1828px;top:491.0px;height:14px;line-height:14px;font-size:14px;color:#e85250;">删除</div>
<div class="a" style="left:443px;top:571px;width:14px;height:14px;background:#fff;border:1px solid #dcdfe6;border-radius:2px"></div>
<div class="t" style="left:486px;top:571.0px;height:14px;line-height:14px;font-size:14px;color:#4a4a4a;letter-spacing:.3px">24</div>
<div class="a" style="left:581px;top:546px;width:64px;height:64px;background:#a8abaf;border-radius:3px"></div>
<div class="t" style="left:601px;top:575.0px;height:6px;line-height:6px;font-size:6px;color:rgba(255,255,255,.55);">暂无图片</div>
<div class="t" style="left:657px;top:549.0px;height:14px;line-height:14px;font-size:14px;color:#4a4a4a;">【<span style="letter-spacing:0.35px">UPF80+</span>】波司登防晒衣<span style="letter-spacing:0.35px">2022</span>年夏季防紫外线冰丝<span style="letter-spacing:0.35px">...</span></div>
<div class="t" style="left:657px;top:568.5px;height:12px;line-height:12px;font-size:12px;color:#999;">夏季防紫外线冰丝</div>
<div class="t" style="left:1027px;top:561.0px;height:14px;line-height:14px;font-size:14px;color:#4a4a4a;letter-spacing:.3px">349.00</div>
<div class="a" style="left:1027px;top:579px;width:68px;height:19px;background:#7064ee;border-radius:10px"></div>
<div class="t" style="left:1035px;top:582.5px;height:12px;line-height:12px;font-size:12px;color:#fff;">多规格</div>
<svg class="a" style="left:1076px;top:585px;" width="9" height="6" viewBox="0 0 9 6"><path d="M1 1 L4.5 4.5 L8 1" stroke="#fff" stroke-width="1.2" fill="none"/></svg>
<div class="t" style="left:1179px;top:571.0px;height:14px;line-height:14px;font-size:14px;color:#4a4a4a;letter-spacing:.3px">9</div>
<div class="t" style="left:1280px;top:571.0px;height:14px;line-height:14px;font-size:14px;color:#4a4a4a;letter-spacing:.3px">255</div>
<div class="t" style="left:1381px;top:571.0px;height:14px;line-height:14px;font-size:14px;color:#4a4a4a;letter-spacing:.3px">142</div>
<svg class="a" style="left:1417px;top:572px;" width="12" height="12" viewBox="0 0 12 12"><rect x="0.6" y="1.6" width="10.8" height="9.8" rx="1" stroke="#7064ee" stroke-width="1.2" fill="none"/><path d="M0.6 3.8 H11.4 M6 5.5 V9.5 M4 7.5 H8" stroke="#7064ee" stroke-width="1.1"/></svg>
<div class="t" style="left:1482px;top:571.0px;height:14px;line-height:14px;font-size:14px;color:#4a4a4a;letter-spacing:.4px">2023-03-09 17:10:33</div>
<div class="a" style="left:1657px;top:566px;width:73px;height:23px;background:#f0f9eb;border-radius:3px"></div>
<div class="t" style="left:1667px;top:573.0px;height:12px;line-height:12px;font-size:12px;color:#5cb034;">上架中</div>
<svg class="a" style="left:1710px;top:575px;" width="9" height="6" viewBox="0 0 9 6"><path d="M1 1 L4.5 4.5 L8 1" stroke="#67c23a" stroke-width="1" fill="none"/></svg>
<div class="t" style="left:1737px;top:571.0px;height:14px;line-height:14px;font-size:14px;color:#6657dc;">编辑</div>
<div class="t" style="left:1782px;top:571.0px;height:14px;line-height:14px;font-size:14px;color:#6657dc;">复制</div>
<div class="t" style="left:1828px;top:571.0px;height:14px;line-height:14px;font-size:14px;color:#e85250;">删除</div>
<div class="a" style="left:426px;top:618px;width:1459px;height:79px;background:#f8f8f8;border-radius:3px"></div>
<div class="a" style="left:443px;top:651px;width:14px;height:14px;background:#fff;border:1px solid #dcdfe6;border-radius:2px"></div>
<div class="t" style="left:486px;top:651.0px;height:14px;line-height:14px;font-size:14px;color:#4a4a4a;letter-spacing:.3px">22</div>
<div class="a" style="left:581px;top:626px;width:64px;height:64px;background:#a2b2a0;border-radius:3px"></div>
<div class="t" style="left:601px;top:655.0px;height:6px;line-height:6px;font-size:6px;color:rgba(255,255,255,.55);">暂无图片</div>
<div class="t" style="left:657px;top:629.0px;height:14px;line-height:14px;font-size:14px;color:#4a4a4a;">猫人男士睡衣男夏季<span style="letter-spacing:0.35px">100%</span>纯棉薄款圆领套头短袖套装<span style="letter-spacing:0.35px">...</span></div>
<div class="t" style="left:657px;top:648.5px;height:12px;line-height:12px;font-size:12px;color:#999;">休闲运动可外穿家居服</div>
<div class="t" style="left:1027px;top:641.0px;height:14px;line-height:14px;font-size:14px;color:#4a4a4a;letter-spacing:.3px">99.00</div>
<div class="a" style="left:1027px;top:659px;width:68px;height:19px;background:#7064ee;border-radius:10px"></div>
<div class="t" style="left:1035px;top:662.5px;height:12px;line-height:12px;font-size:12px;color:#fff;">多规格</div>
<svg class="a" style="left:1076px;top:665px;" width="9" height="6" viewBox="0 0 9 6"><path d="M1 1 L4.5 4.5 L8 1" stroke="#fff" stroke-width="1.2" fill="none"/></svg>
<div class="t" style="left:1179px;top:651.0px;height:14px;line-height:14px;font-size:14px;color:#4a4a4a;letter-spacing:.3px">13</div>
<div class="t" style="left:1280px;top:651.0px;height:14px;line-height:14px;font-size:14px;color:#4a4a4a;letter-spacing:.3px">51</div>
<div class="t" style="left:1381px;top:651.0px;height:14px;line-height:14px;font-size:14px;color:#4a4a4a;letter-spacing:.3px">55</div>
<svg class="a" style="left:1409px;top:652px;" width="12" height="12" viewBox="0 0 12 12"><rect x="0.6" y="1.6" width="10.8" height="9.8" rx="1" stroke="#7064ee" stroke-width="1.2" fill="none"/><path d="M0.6 3.8 H11.4 M6 5.5 V9.5 M4 7.5 H8" stroke="#7064ee" stroke-width="1.1"/></svg>
<div class="t" style="left:1482px;top:651.0px;height:14px;line-height:14px;font-size:14px;color:#4a4a4a;letter-spacing:.4px">2023-03-09 17:10:33</div>
<div class="a" style="left:1657px;top:646px;width:73px;height:23px;background:#f0f9eb;border-radius:3px"></div>
<div class="t" style="left:1667px;top:653.0px;height:12px;line-height:12px;font-size:12px;color:#5cb034;">上架中</div>
<svg class="a" style="left:1710px;top:655px;" width="9" height="6" viewBox="0 0 9 6"><path d="M1 1 L4.5 4.5 L8 1" stroke="#67c23a" stroke-width="1" fill="none"/></svg>
<div class="t" style="left:1737px;top:651.0px;height:14px;line-height:14px;font-size:14px;color:#6657dc;">编辑</div>
<div class="t" style="left:1782px;top:651.0px;height:14px;line-height:14px;font-size:14px;color:#6657dc;">复制</div>
<div class="t" style="left:1828px;top:651.0px;height:14px;line-height:14px;font-size:14px;color:#e85250;">删除</div>
<div class="a" style="left:443px;top:731px;width:14px;height:14px;background:#fff;border:1px solid #dcdfe6;border-radius:2px"></div>
<div class="t" style="left:486px;top:731.0px;height:14px;line-height:14px;font-size:14px;color:#4a4a4a;letter-spacing:.3px">21</div>
<div class="a" style="left:581px;top:706px;width:64px;height:64px;background:#7b91a7;border-radius:3px"></div>
<div class="t" style="left:601px;top:735.0px;height:6px;line-height:6px;font-size:6px;color:rgba(255,255,255,.55);">暂无图片</div>
<div class="t" style="left:657px;top:709.0px;height:14px;line-height:14px;font-size:14px;color:#4a4a4a;"><span style="letter-spacing:0.35px">CACUSS B0520</span>帽子男百搭潮流棒球帽女休闲户外鸭<span style="letter-spacing:0.35px">...</span></div>
<div class="t" style="left:657px;top:728.5px;height:12px;line-height:12px;font-size:12px;color:#999;">百搭潮流棒球帽</div>
<div class="t" style="left:1027px;top:721.0px;height:14px;line-height:14px;font-size:14px;color:#4a4a4a;letter-spacing:.3px">69.00</div>
<div class="a" style="left:1027px;top:739px;width:68px;height:19px;background:#7064ee;border-radius:10px"></div>
<div class="t" style="left:1035px;top:742.5px;height:12px;line-height:12px;font-size:12px;color:#fff;">多规格</div>
<svg class="a" style="left:1076px;top:745px;" width="9" height="6" viewBox="0 0 9 6"><path d="M1 1 L4.5 4.5 L8 1" stroke="#fff" stroke-width="1.2" fill="none"/></svg>
<div class="t" style="left:1179px;top:731.0px;height:14px;line-height:14px;font-size:14px;color:#4a4a4a;letter-spacing:.3px">3</div>
<div class="t" style="left:1280px;top:731.0px;height:14px;line-height:14px;font-size:14px;color:#4a4a4a;letter-spacing:.3px">20</div>
<div class="t" style="left:1381px;top:731.0px;height:14px;line-height:14px;font-size:14px;color:#4a4a4a;letter-spacing:.3px">33</div>
<svg class="a" style="left:1409px;top:732px;" width="12" height="12" viewBox="0 0 12 12"><rect x="0.6" y="1.6" width="10.8" height="9.8" rx="1" stroke="#7064ee" stroke-width="1.2" fill="none"/><path d="M0.6 3.8 H11.4 M6 5.5 V9.5 M4 7.5 H8" stroke="#7064ee" stroke-width="1.1"/></svg>
<div class="t" style="left:1482px;top:731.0px;height:14px;line-height:14px;font-size:14px;color:#4a4a4a;letter-spacing:.4px">2023-03-09 17:10:33</div>
<div class="a" style="left:1657px;top:726px;width:73px;height:23px;background:#f0f9eb;border-radius:3px"></div>
<div class="t" style="left:1667px;top:733.0px;height:12px;line-height:12px;font-size:12px;color:#5cb034;">上架中</div>
<svg class="a" style="left:1710px;top:735px;" width="9" height="6" viewBox="0 0 9 6"><path d="M1 1 L4.5 4.5 L8 1" stroke="#67c23a" stroke-width="1" fill="none"/></svg>
<div class="t" style="left:1737px;top:731.0px;height:14px;line-height:14px;font-size:14px;color:#6657dc;">编辑</div>
<div class="t" style="left:1782px;top:731.0px;height:14px;line-height:14px;font-size:14px;color:#6657dc;">复制</div>
<div class="t" style="left:1828px;top:731.0px;height:14px;line-height:14px;font-size:14px;color:#e85250;">删除</div>
<div class="a" style="left:426px;top:778px;width:1459px;height:79px;background:#f8f8f8;border-radius:3px"></div>
<div class="a" style="left:443px;top:811px;width:14px;height:14px;background:#fff;border:1px solid #dcdfe6;border-radius:2px"></div>
<div class="t" style="left:486px;top:811.0px;height:14px;line-height:14px;font-size:14px;color:#4a4a4a;letter-spacing:.3px">19</div>
<div class="a" style="left:581px;top:786px;width:64px;height:64px;background:#d8caa9;border-radius:3px"></div>
<div class="t" style="left:601px;top:815.0px;height:6px;line-height:6px;font-size:6px;color:rgba(255,255,255,.55);">暂无图片</div>
<div class="t" style="left:657px;top:789.0px;height:14px;line-height:14px;font-size:14px;color:#4a4a4a;"><span style="letter-spacing:0.35px">Apple iPhone 13 Pro Max (A2644) 256GB </span>苍岭绿色<span style="letter-spacing:0.35px">...</span></div>
<div class="t" style="left:657px;top:808.5px;height:12px;line-height:12px;font-size:12px;color:#999;"><span style="letter-spacing:0.3px">Apple iPhone 13 Pro Max (A2644) 256GB </span>苍岭绿色 支持移<span style="letter-spacing:0.3px">...</span></div>
<div class="t" style="left:1027px;top:811.0px;height:14px;line-height:14px;font-size:14px;color:#4a4a4a;letter-spacing:.3px">7980.00</div>
<div class="t" style="left:1179px;top:811.0px;height:14px;line-height:14px;font-size:14px;color:#4a4a4a;letter-spacing:.3px">1</div>
<div class="t" style="left:1280px;top:811.0px;height:14px;line-height:14px;font-size:14px;color:#4a4a4a;letter-spacing:.3px">46</div>
<div class="t" style="left:1381px;top:811.0px;height:14px;line-height:14px;font-size:14px;color:#4a4a4a;letter-spacing:.3px">19</div>
<svg class="a" style="left:1409px;top:812px;" width="12" height="12" viewBox="0 0 12 12"><rect x="0.6" y="1.6" width="10.8" height="9.8" rx="1" stroke="#7064ee" stroke-width="1.2" fill="none"/><path d="M0.6 3.8 H11.4 M6 5.5 V9.5 M4 7.5 H8" stroke="#7064ee" stroke-width="1.1"/></svg>
<div class="t" style="left:1482px;top:811.0px;height:14px;line-height:14px;font-size:14px;color:#4a4a4a;letter-spacing:.4px">2023-03-09 17:10:33</div>
<div class="a" style="left:1657px;top:806px;width:73px;height:23px;background:#f0f9eb;border-radius:3px"></div>
<div class="t" style="left:1667px;top:813.0px;height:12px;line-height:12px;font-size:12px;color:#5cb034;">上架中</div>
<svg class="a" style="left:1710px;top:815px;" width="9" height="6" viewBox="0 0 9 6"><path d="M1 1 L4.5 4.5 L8 1" stroke="#67c23a" stroke-width="1" fill="none"/></svg>
<div class="t" style="left:1737px;top:811.0px;height:14px;line-height:14px;font-size:14px;color:#6657dc;">编辑</div>
<div class="t" style="left:1782px;top:811.0px;height:14px;line-height:14px;font-size:14px;color:#6657dc;">复制</div>
<div class="t" style="left:1828px;top:811.0px;height:14px;line-height:14px;font-size:14px;color:#e85250;">删除</div>
<div class="a" style="left:443px;top:891px;width:14px;height:14px;background:#fff;border:1px solid #dcdfe6;border-radius:2px"></div>
<div class="t" style="left:486px;top:891.0px;height:14px;line-height:14px;font-size:14px;color:#4a4a4a;letter-spacing:.3px">18</div>
<div class="a" style="left:581px;top:866px;width:64px;height:64px;background:#d8d5c9;border-radius:3px"></div>
<div class="t" style="left:601px;top:895.0px;height:6px;line-height:6px;font-size:6px;color:rgba(255,255,255,.55);">暂无图片</div>
<div class="t" style="left:657px;top:869.0px;height:14px;line-height:14px;font-size:14px;color:#4a4a4a;"><span style="letter-spacing:0.35px">Apple Watch Series 7 </span>智能手表<span style="letter-spacing:0.35px">GPS</span>款<span style="letter-spacing:0.35px">41 </span>毫米星光色<span style="letter-spacing:0.35px">...</span></div>
<div class="t" style="left:657px;top:888.5px;height:12px;line-height:12px;font-size:12px;color:#999;"></div>
<div class="t" style="left:1027px;top:891.0px;height:14px;line-height:14px;font-size:14px;color:#4a4a4a;letter-spacing:.3px"></div>
<div class="t" style="left:1179px;top:891.0px;height:14px;line-height:14px;font-size:14px;color:#4a4a4a;letter-spacing:.3px"></div>
<div class="t" style="left:1280px;top:891.0px;height:14px;line-height:14px;font-size:14px;color:#4a4a4a;letter-spacing:.3px"></div>
<div class="a" style="left:1878px;top:221px;width:5px;height:530px;background:#e3e3e3;border-radius:3px"></div>
<div class="a" style="left:245px;top:872px;width:1660px;height:58px;background:#fff;border-radius:6px;box-shadow:0 -2px 6px rgba(0,0,0,.05)"></div>
<div class="t" style="left:265px;top:895.0px;height:14px;line-height:14px;font-size:14px;color:#444;">已选择 0 项</div>
<div class="a" style="left:350px;top:886px;width:59px;height:31px;background:#fab6b6;border-radius:3px"></div>
<div class="t" style="left:350px;top:895.0px;height:14px;line-height:14px;font-size:14px;color:#fff;width:59px;text-align:center">删除</div>
<div class="a" style="left:422px;top:886px;width:59px;height:31px;background:#b3e19d;border-radius:3px"></div>
<div class="t" style="left:422px;top:895.0px;height:14px;line-height:14px;font-size:14px;color:#fff;width:59px;text-align:center">上架</div>
<div class="a" style="left:494px;top:886px;width:59px;height:31px;background:#fab6b6;border-radius:3px"></div>
<div class="t" style="left:494px;top:895.0px;height:14px;line-height:14px;font-size:14px;color:#fff;width:59px;text-align:center">下架</div>
<div class="a" style="left:566px;top:886px;width:59px;height:31px;background:#c8c9cc;border-radius:3px"></div>
<div class="t" style="left:566px;top:895.0px;height:14px;line-height:14px;font-size:14px;color:#fff;width:59px;text-align:center">隐藏</div>
<div class="t" style="left:1398px;top:895.0px;height:14px;line-height:14px;font-size:14px;color:#555;">共 22 条</div>
<div class="a" style="left:1467px;top:886px;width:128px;height:32px;background:#fff;border:1px solid #dcdfe6;border-radius:4px"></div>
<div class="t" style="left:1495px;top:895.0px;height:14px;line-height:14px;font-size:14px;color:#555;">10条/页</div>
<svg class="a" style="left:1571px;top:899px;" width="11" height="7" viewBox="0 0 11 7"><path d="M1 1 L5.5 5.5 L10 1" stroke="#c0c4cc" stroke-width="1.2" fill="none"/></svg>
<svg class="a" style="left:1624px;top:897px;" width="6" height="10" viewBox="0 0 6 10"><path d="M5 1 L1 5 L5 9" stroke="#c0c4cc" stroke-width="1.3" fill="none"/></svg>
<div class="t" style="left:1656px;top:895.0px;height:14px;line-height:14px;font-size:14px;color:#7064ee;">1</div>
<div class="t" style="left:1687px;top:895.0px;height:14px;line-height:14px;font-size:14px;color:#444;">2</div>
<div class="t" style="left:1719px;top:895.0px;height:14px;line-height:14px;font-size:14px;color:#444;">3</div>
<svg class="a" style="left:1752px;top:897px;" width="6" height="10" viewBox="0 0 6 10"><path d="M1 1 L5 5 L1 9" stroke="#444" stroke-width="1.3" fill="none"/></svg>
<div class="t" style="left:1787px;top:895.0px;height:14px;line-height:14px;font-size:14px;color:#555;">前往</div>
<div class="a" style="left:1815px;top:890px;width:52px;height:24px;background:#fff;border:1px solid #dcdfe6;border-radius:3px"></div>
<div class="t" style="left:1840px;top:896.5px;height:13px;line-height:13px;font-size:13px;color:#555;">1</div>
<div class="a" style="left:1861px;top:835px;width:38px;height:38px;background:#fff;border-radius:50%;box-shadow:0 0 6px rgba(0,0,0,.05)"></div>
<svg class="a" style="left:1873px;top:846px;" width="14" height="16" viewBox="0 0 14 16"><path d="M7 1 Q2 1 2 6.5 V10.5 L0.5 12.5 H13.5 L12 10.5 V6.5 Q12 1 7 1Z" fill="#7064ee"/><circle cx="7" cy="14" r="1.6" fill="#7064ee"/></svg>
<div class="a" style="left:1861px;top:885px;width:38px;height:38px;background:#fff;border-radius:50%;box-shadow:0 0 6px rgba(0,0,0,.05)"></div>
<svg class="a" style="left:1871px;top:896px;" width="17" height="17" viewBox="0 0 17 17"><path d="M8.5 1 A7.5 7.5 0 1 0 8.5 16 Q10 16 11.5 15.5 L15 16 L14.5 12.5 A7.5 7.5 0 0 0 8.5 1Z" fill="#7064ee"/><circle cx="5" cy="8.5" r="1.1" fill="#fff"/><circle cx="8.5" cy="8.5" r="1.1" fill="#fff"/><circle cx="12" cy="8.5" r="1.1" fill="#fff"/></svg>
<div class="a" style="left:1916px;top:132px;width:10px;height:80px;background:#3f7de8;border-radius:5px"></div>
</body></html>
